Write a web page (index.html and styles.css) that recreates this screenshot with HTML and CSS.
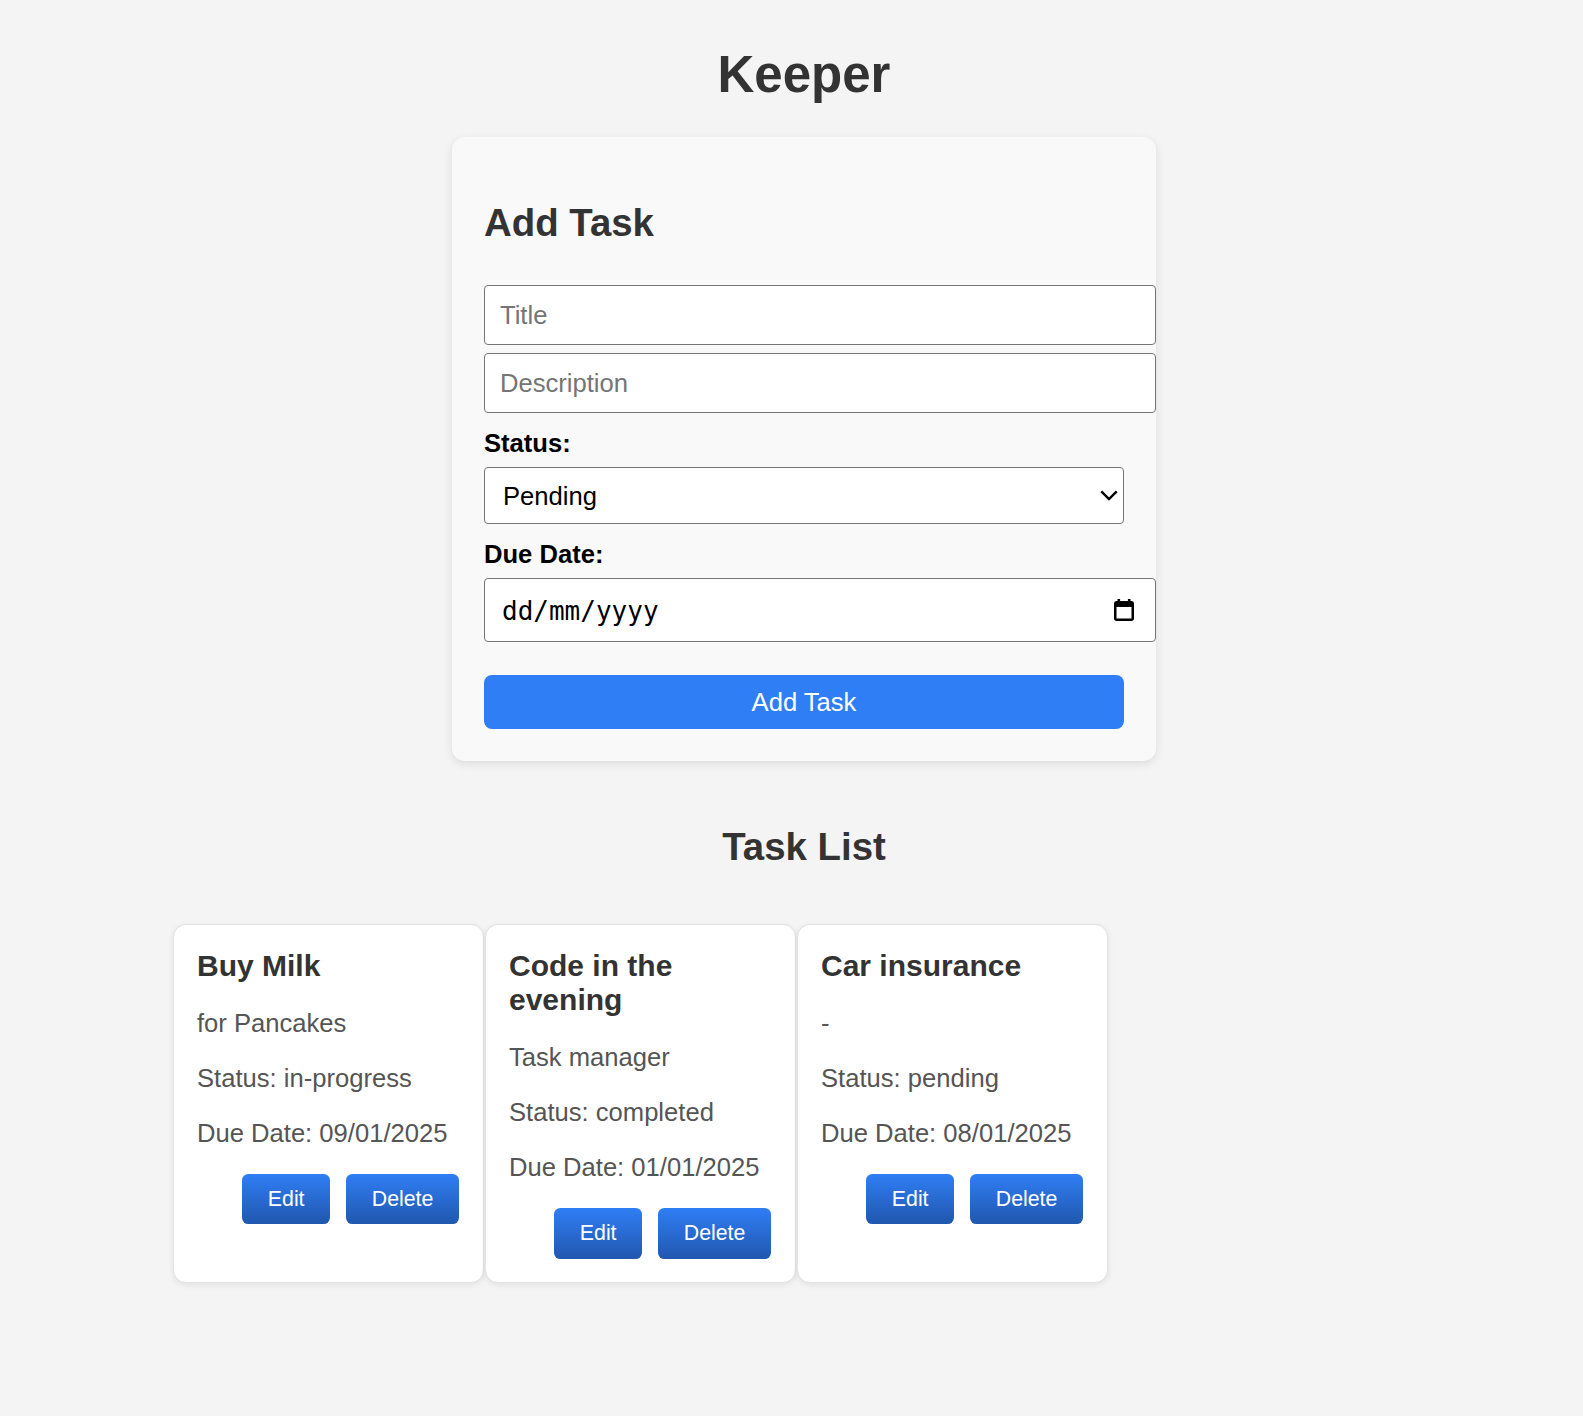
FILE: index.html
```html
<!DOCTYPE html>
<html lang="en">
<head>
    <meta charset="UTF-8">
    <title>Keeper</title>
    <link rel="stylesheet" href="styles.css">
</head>
<body>
<div class="app">
    <h1 class="title">Keeper</h1>

    <div class="form-card">
        <h2>Add Task</h2>
        <form class="task-form">
            <input class="text-input" type="text" placeholder="Title">
            <input class="text-input" type="text" placeholder="Description">

            <label class="field-label" for="status">Status:</label>
            <div class="select-wrap">
                <select id="status">
                    <option>Pending</option>
                    <option>In Progress</option>
                    <option>Completed</option>
                </select>
                <svg class="select-arrow" viewBox="0 0 18 11" width="18" height="11">
                    <polyline points="1.3,1.3 9,9 16.7,1.3" fill="none" stroke="#000" stroke-width="2.4"/>
                </svg>
            </div>

            <label class="field-label" for="due">Due Date:</label>
            <div class="date-field">
                <input class="date-input" id="due" type="text" placeholder="dd/mm/yyyy">
                <svg class="date-icon" viewBox="0 0 20 22" width="20" height="22">
                    <rect x="3.5" y="0" width="2.6" height="4" fill="#000"/>
                    <rect x="13.9" y="0" width="2.6" height="4" fill="#000"/>
                    <rect x="1.25" y="3.25" width="17.5" height="17.5" rx="1.5" fill="none" stroke="#000" stroke-width="2.5"/>
                    <rect x="1" y="3" width="18" height="5" fill="#000"/>
                </svg>
            </div>

            <button class="add-btn" type="button">Add Task</button>
        </form>
    </div>

    <h2 class="list-title">Task List</h2>

    <div class="task-grid">
        <div class="task-card">
            <h3>Buy Milk</h3>
            <p>for Pancakes</p>
            <p>Status: in-progress</p>
            <p>Due Date: 09/01/2025</p>
            <div class="task-actions">
                <button class="btn">Edit</button>
                <button class="btn">Delete</button>
            </div>
        </div>
        <div class="task-card">
            <h3>Code in the evening</h3>
            <p>Task manager</p>
            <p>Status: completed</p>
            <p>Due Date: 01/01/2025</p>
            <div class="task-actions">
                <button class="btn">Edit</button>
                <button class="btn">Delete</button>
            </div>
        </div>
        <div class="task-card">
            <h3>Car insurance</h3>
            <p>-</p>
            <p>Status: pending</p>
            <p>Due Date: 08/01/2025</p>
            <div class="task-actions">
                <button class="btn">Edit</button>
                <button class="btn">Delete</button>
            </div>
        </div>
    </div>
</div>
</body>
</html>
```

FILE: styles.css
```css
body {
    margin: 0;
    background: #f4f4f4;
    font-family: "Liberation Sans", Arial, sans-serif;
    color: #333;
}

.app {
    padding: 45px 0 130px 25px;
}

.title {
    font-size: 51px;
    line-height: 59px;
    margin: 0 0 33px;
    text-align: center;
}

/* add task form */
.form-card {
    width: 640px;
    margin: 0 auto;
    padding: 32px;
    background: #f9f9f9;
    border-radius: 13px;
    box-shadow: 0 3px 10px rgba(0, 0, 0, 0.1);
}

.form-card h2 {
    font-size: 38.4px;
    line-height: 44px;
    margin: 32px 0 40px;
}

.text-input {
    display: block;
    width: 100%;
    height: 30px;
    margin: 8px 0 0;
    padding: 14px 15px;
    border: 1px solid #767676;
    border-radius: 4px;
    background: #fff;
    font-family: inherit;
    font-size: 25.6px;
    line-height: 30px;
    color: #000;
}

.text-input::placeholder {
    color: #757575;
}

.field-label {
    display: block;
    margin-top: 16px;
    font-size: 25.6px;
    line-height: 29px;
    font-weight: bold;
    color: #000;
}

.select-wrap {
    position: relative;
    margin-top: 9px;
}

.select-wrap select {
    display: block;
    width: 100%;
    height: 57px;
    padding: 0 18px;
    border: 1px solid #767676;
    border-radius: 4px;
    background: #fff;
    font-family: inherit;
    font-size: 25.6px;
    color: #000;
    -webkit-appearance: none;
    appearance: none;
}

.select-arrow {
    position: absolute;
    right: 6px;
    top: 23px;
    pointer-events: none;
}

.date-field {
    display: flex;
    align-items: center;
    width: 100%;
    height: 62px;
    margin-top: 9px;
    padding: 0 15px;
    border: 1px solid #767676;
    border-radius: 4px;
    background: #fff;
}

.date-input {
    flex: 1;
    min-width: 0;
    margin: 2px 0 0 2px;
    padding: 0;
    border: none;
    outline: none;
    background: transparent;
    font-family: "DejaVu Sans Mono", monospace;
    font-size: 26px;
    color: #000;
}

.date-input::placeholder {
    color: #000;
}

.date-icon {
    margin-right: 6px;
    flex-shrink: 0;
}

.add-btn {
    display: block;
    width: 100%;
    height: 54px;
    margin-top: 33px;
    border: none;
    border-radius: 8px;
    background: #2f7ef5;
    color: #fff;
    font-family: inherit;
    font-size: 25.6px;
}

/* task list */
.list-title {
    font-size: 38.4px;
    line-height: 44px;
    margin: 64px 0 55px;
    text-align: center;
}

.task-grid {
    display: flex;
    gap: 1.5px;
    margin-left: 148px;
}

.task-card {
    box-sizing: border-box;
    width: 310.5px;
    padding: 24px 23.5px 23px 23px;
    background: #fff;
    border: 1px solid #e2e2e2;
    border-radius: 13px;
    box-shadow: 0 2px 6px rgba(0, 0, 0, 0.08);
}

.task-card h3 {
    margin: 0;
    font-size: 30px;
    line-height: 34.4px;
    color: #333;
}

.task-card p {
    margin: 25.6px 0 0;
    font-size: 25.6px;
    line-height: 29.4px;
    color: #555;
}

.task-actions {
    display: flex;
    justify-content: flex-end;
    gap: 16px;
    margin-top: 25.6px;
}

.btn {
    padding: 12.8px 25.6px;
    border: none;
    border-radius: 6.4px;
    background: linear-gradient(#2f7ef5, #2157ae);
    color: #fff;
    font-family: inherit;
    font-size: 21.33px;
    line-height: 24.8px;
    cursor: pointer;
}
```
